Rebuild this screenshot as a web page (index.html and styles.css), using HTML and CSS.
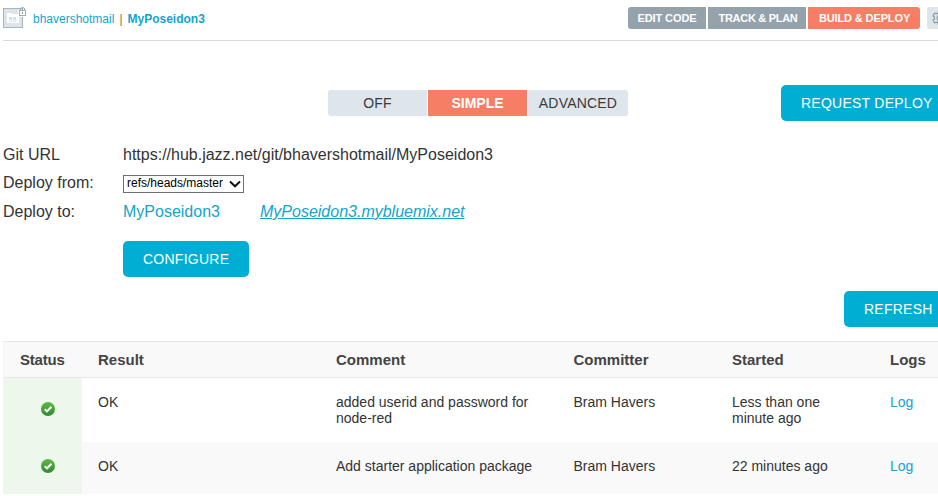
FILE: index.html
```html
<!DOCTYPE html>
<html lang="en">
<head>
<meta charset="utf-8">
<title>MyPoseidon3 - Build &amp; Deploy</title>
<link rel="stylesheet" href="styles.css">
</head>
<body>
<header class="banner">
  <svg class="project-icon" width="24" height="22" viewBox="0 0 24 22">
    <rect x="0.5" y="1.5" width="19" height="19" fill="#dce3e9" stroke="#a9b5be"/>
    <path d="M4 6h4l1 1h7v9H4z" fill="#fff"/>
    <g fill="none" stroke="#d3dce2"><rect x="6.5" y="10.5" width="2" height="1.500"/><rect x="10.5" y="10.5" width="2" height="1.500"/><rect x="6.500" y="12.500" width="2.500" height="2" rx="1"/><rect x="10.500" y="12.500" width="2.500" height="2" rx="1"/></g>
    <path d="M15 3h8v7h-8z" fill="#fff"/>
    <path d="M17.500 4V2q0-1.500 2-1.500t2 1.500v2" fill="none" stroke="#a0abb3"/>
    <rect x="16.500" y="3.500" width="6" height="5" fill="#fff" stroke="#a0abb3"/>
    <path d="M19 5h1v2h-1z" fill="#87949d"/>
  </svg>
  <nav class="crumbs"><a class="owner">bhavershotmail</a><span class="bar">|</span><a class="project">MyPoseidon3</a></nav>
  <nav class="tabs">
    <a class="tab edit">EDIT CODE</a>
    <a class="tab plan">TRACK &amp; PLAN</a>
    <a class="tab deploy">BUILD &amp; DEPLOY</a>
  </nav>
  <a class="settings">
    <svg width="16" height="16" viewBox="0 0 16 16" fill="none" stroke="#8a99a5" stroke-width="1.200"><path d="M6.500 1h3l.5 2 1.500.8 2-.6 1.500 2.600L13.500 7.200v1.600l1.500 1.400-1.500 2.600-2-.6-1.500.8-.5 2h-3L6 13l-1.500-.8-2 .6L1 10.200l1.500-1.400V7.200L1 5.800l1.500-2.600 2 .6L6 3z"/><circle cx="8" cy="8" r="3"/></svg>
  </a>
</header>
<main>
  <section class="mode-row">
    <div class="modes">
      <a class="mode">OFF</a><a class="mode active">SIMPLE</a><a class="mode advanced">ADVANCED</a>
    </div>
    <a class="button request"><span>REQUEST DEPLOY</span></a>
  </section>
  <section class="details">
    <span>Git URL</span><span class="url">https://hub.jazz.net/git/bhavershotmail/MyPoseidon3</span>
    <span>Deploy from:</span>
    <div class="select"><span>refs/heads/master</span><svg width="12" height="8" viewBox="0 0 12 8"><path d="M1 1.500L6 6.300l5-4.800" fill="none" stroke="#111" stroke-width="2"/></svg></div>
    <span>Deploy to:</span>
    <div class="targets"><a class="app">MyPoseidon3</a><a class="route">MyPoseidon3.mybluemix.net</a></div>
  </section>
  <a class="button configure"><span>CONFIGURE</span></a>
  <a class="button refresh"><span>REFRESH</span></a>
  <div class="builds">
    <div class="row head"><b class="status-title">Status</b><b>Result</b><b>Comment</b><b>Committer</b><b>Started</b><b>Logs</b></div>
    <div class="row first">
      <div class="status"><svg width="14" height="14" viewBox="0 0 14 14"><defs><linearGradient id="ok" x2="0" y2="1"><stop stop-color="#5cba48"/><stop offset="1" stop-color="#328a2d"/></linearGradient></defs><circle cx="7" cy="7" r="7" fill="url(#ok)"/><path d="M3.700 7.200L6 9.300l4.500-4.500" fill="none" stroke="#fff" stroke-width="2"/></svg></div>
      <span>OK</span><span>added userid and password for<br>node-red</span><span>Bram Havers</span><span>Less than one<br>minute ago</span><a>Log</a>
    </div>
    <div class="row second">
      <div class="status"><svg width="14" height="14" viewBox="0 0 14 14"><circle cx="7" cy="7" r="7" fill="url(#ok)"/><path d="M3.700 7.200L6 9.300l4.500-4.500" fill="none" stroke="#fff" stroke-width="2"/></svg></div>
      <span>OK</span><span>Add starter application package</span><span>Bram Havers</span><span>22 minutes ago</span><a>Log</a>
    </div>
  </div>
</main>
</body>
</html>
```
FILE: styles.css
```css
* { box-sizing: border-box; }
body {
  margin: 0;
  padding-left: 3px;
  height: 496px;
  overflow: hidden;
  background: #fff;
  color: #333;
  font: 16px/20px "Liberation Sans", Arial, sans-serif;
}
a { color: #12a5ca; }
.banner {
  display: flex;
  height: 41px;
  border-bottom: 1px solid #dadada;
  white-space: nowrap;
}
.project-icon { flex: none; margin-top: 7px; }
.crumbs { margin: 9px 0 0 6px; font-size: 12px; }
.bar { margin: 0 5px; color: #a8682c; }
.project { font-weight: bold; }
.tabs { display: flex; gap: 2px; margin: 7px 7px 0 auto; }
.tab {
  height: 22px;
  background: #94a2ac;
  color: #fff;
  font-size: 11px;
  font-weight: bold;
  line-height: 23px;
  text-align: center;
}
.edit { width: 78px; border-radius: 3px 0 0 3px; letter-spacing: -.1px; }
.plan { width: 98px; padding-left: 2px; letter-spacing: -.3px; }
.deploy { width: 112px; padding-left: 1px; border-radius: 0 3px 3px 0; background: #f67e64; letter-spacing: -.12px; }
.settings {
  width: 11px;
  height: 22px;
  margin-top: 7px;
  padding: 3px 0 0 5px;
  overflow: hidden;
  border-radius: 3px 0 0 3px;
  background: #dee5eb;
}
.mode-row { display: flex; padding-top: 44px; }
.modes {
  display: flex;
  gap: 1px;
  width: 300px;
  height: 26px;
  margin: 5px 0 0 325px;
  overflow: hidden;
  border-radius: 3px;
}
.mode {
  flex: none;
  width: 99px;
  background: #dee5eb;
  color: #3a3a3a;
  font-size: 14px;
  letter-spacing: .2px;
  line-height: 27px;
  text-align: center;
}
.active { background: #f67e64; color: #fff; font-weight: bold; letter-spacing: 0; }
.advanced { width: 100px; }
.button {
  display: block;
  height: 36px;
  padding-left: 20px;
  border-radius: 5px;
  background: #00aed3;
  color: #fff;
  font-size: 14px;
  letter-spacing: .25px;
  line-height: 37px;
  white-space: nowrap;
}
.request { width: 157px; margin-left: auto; border-radius: 5px 0 0 5px; }
.details {
  display: grid;
  grid-template-columns: 120px 1fr;
  grid-template-rows: 28px 29px 29px;
  margin-top: 24px;
}
.select {
  display: flex;
  align-items: center;
  justify-content: space-between;
  width: 121px;
  height: 18px;
  margin-top: 2px;
  padding: 0 2px 0 3px;
  border: 1px solid #707070;
  color: #000;
  font-size: 12px;
  line-height: 15px;
}
.select span { margin-top: -2px; }
.targets { display: flex; }
.app { width: 137px; }
.route { font-style: italic; text-decoration: underline; }
.configure { width: 126px; margin: 10px 0 14px 120px; }
.refresh { width: 94px; margin-left: auto; border-radius: 5px 0 0 5px; }
.builds { margin-top: 14px; font-size: 14px; line-height: 16px; }
.row { display: grid; grid-template-columns: 95px 238px 237.500px 158.500px 158px 48px; }
.head {
  height: 37px;
  padding-top: 10px;
  border-top: 1px solid #e8e8e8;
  border-bottom: 1px solid #e8e8e8;
  background: #f9f9f9;
  color: #444;
  font-size: 15px;
}
.status-title { padding-left: 17px; letter-spacing: -.2px; }
.row > span, .row > a { padding-top: 16px; }
.first { height: 64px; }
.second { height: 52px; background: #f9f9f9; }
.status { width: 79px; background: #edf7eb; padding: 24px 0 0 38px; }
.second .status { padding-top: 17px; }
.status svg { display: block; }
```
